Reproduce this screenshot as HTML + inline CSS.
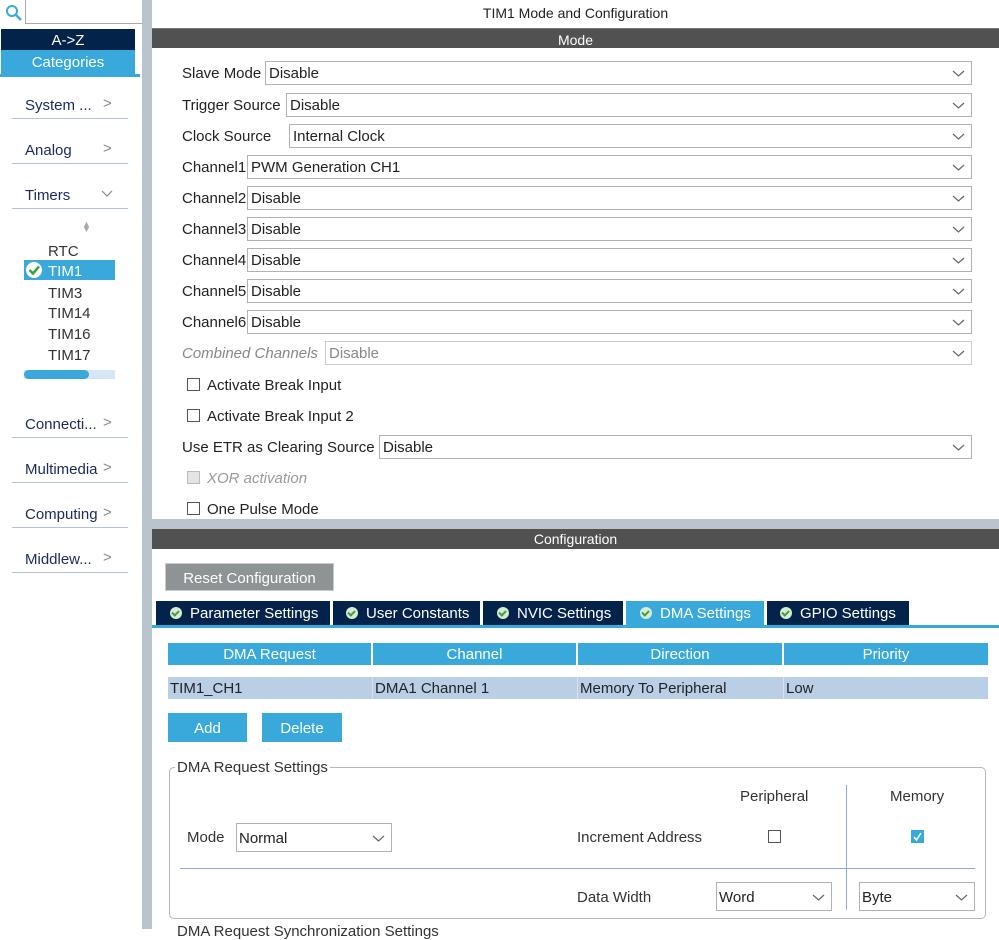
<!DOCTYPE html>
<html><head><meta charset="utf-8"><style>
*{box-sizing:border-box;margin:0;padding:0}
body{width:999px;height:929px;overflow:hidden;background:#fff;font-family:"Liberation Sans",Arial,sans-serif;font-size:15px;color:#222;position:relative}
.a{position:absolute}
.sel{position:absolute;height:24px;border:1px solid #aeb3b8;background:#fff;padding-left:3px;line-height:24px;right:27px;color:#222}
.sel .v,.sm .v{position:absolute;right:6px;top:8px;width:13px;height:7px}
.lbl{position:absolute;left:182px;line-height:26px}
.cb{position:absolute;width:13px;height:13px;border:1px solid #555;background:#fff}
.side{position:absolute;left:25px;color:#1b2a5a;font-size:15px}
.sline{position:absolute;left:12px;width:116px;height:1px;background:#b4c3d2}
.chev{position:absolute;left:103px;color:#888;font-size:15px}
.tab{position:absolute;top:601px;height:24px;background:#03234b;color:#fff;line-height:25px;font-size:15px;padding-left:14px}
.tab i{display:inline-block;width:12px;height:12px;border-radius:50%;background:#d8ecd2;margin-right:8px;vertical-align:-1px;position:relative}
.tab i:after{content:"";position:absolute;left:3px;top:2px;width:3px;height:5px;border:solid #3aa047;border-width:0 2px 2px 0;transform:rotate(45deg)}
.th{position:absolute;top:643px;height:22px;background:#39a9dc;color:#fff;text-align:center;line-height:24px}
.td{position:absolute;top:677px;height:22px;background:#b9cfe6;line-height:24px;padding-left:2px}
.sm{position:absolute;height:29px;border:1px solid #aeb3b8;background:#fff;line-height:29px;padding-left:2px}
</style></head><body>
<svg width="0" height="0" style="position:absolute"><defs><symbol id="dv" viewBox="0 0 13 7"><path d="M1 1 L6.5 6 L12 1" fill="none" stroke="#666" stroke-width="1.2"/></symbol></defs></svg>
<div class="a" style="left:142px;top:0;width:10px;height:929px;background:#b9c4cc"></div>
<svg class="a" style="left:5px;top:4px" width="18" height="18"><circle cx="7" cy="7" r="5" fill="none" stroke="#39a9dc" stroke-width="2"/><path d="M11 11 L16 16" stroke="#39a9dc" stroke-width="2.5"/></svg>
<div class="a" style="left:25px;top:0;width:117px;height:24px;border-left:1px solid #aaa;border-bottom:1px solid #aaa"></div>
<div class="a" style="left:1px;top:29px;width:134px;height:21px;background:#03234b;color:#fff;text-align:center;line-height:23px">A-&gt;Z</div>
<div class="a" style="left:1px;top:50px;width:134px;height:24px;background:#39a9dc;color:#fff;text-align:center;line-height:25px">Categories</div>
<div class="a" style="left:0;top:74px;width:140px;height:3px;background:#39a9dc"></div>
<div class="side" style="top:97px">System ...</div><div class="chev" style="top:95px">&gt;</div><div class="sline" style="top:118px"></div>
<div class="side" style="top:142px">Analog</div><div class="chev" style="top:140px">&gt;</div><div class="sline" style="top:163px"></div>
<div class="side" style="top:187px">Timers</div><svg class="a" style="left:101px;top:190px" width="12" height="8"><path d="M1 1 L6 6 L11 1" fill="none" stroke="#888" stroke-width="1.2"/></svg><div class="sline" style="top:208px"></div>
<div class="a" style="left:82px;top:222px;color:#aaa;font-size:9px;line-height:5px">▲<br>▼</div>
<div class="a" style="left:48px;top:243px;color:#333">RTC</div>
<div class="a" style="left:24px;top:260px;width:91px;height:20px;background:#39a9dc"></div>
<svg class="a" style="left:25px;top:261px" width="18" height="18"><circle cx="9" cy="9" r="8" fill="#fff"/><path d="M4.5 9 L8 12.5 L14 5.5" fill="none" stroke="#3aa047" stroke-width="2.5"/></svg>
<div class="a" style="left:48px;top:263px;color:#fff">TIM1</div>
<div class="a" style="left:48px;top:285px;color:#333">TIM3</div>
<div class="a" style="left:48px;top:305px;color:#333">TIM14</div>
<div class="a" style="left:48px;top:326px;color:#333">TIM16</div>
<div class="a" style="left:48px;top:347px;color:#333">TIM17</div>
<div class="a" style="left:24px;top:370px;width:91px;height:9px;background:#d5e6f5"></div>
<div class="a" style="left:24px;top:370px;width:65px;height:9px;background:#39a9dc;border-radius:5px"></div>
<div class="side" style="top:416px">Connecti...</div><div class="chev" style="top:414px">&gt;</div><div class="sline" style="top:437px"></div>
<div class="side" style="top:461px">Multimedia</div><div class="chev" style="top:459px">&gt;</div><div class="sline" style="top:482px"></div>
<div class="side" style="top:506px">Computing</div><div class="chev" style="top:504px">&gt;</div><div class="sline" style="top:527px"></div>
<div class="side" style="top:551px">Middlew...</div><div class="chev" style="top:549px">&gt;</div><div class="sline" style="top:572px"></div>
<div class="a" style="left:152px;top:5px;width:847px;text-align:center;font-size:14px">TIM1 Mode and Configuration</div>
<div class="a" style="left:152px;top:28px;width:847px;height:20px;background:#505150;color:#fff;text-align:center;line-height:22px;font-size:14px;border-top:1px solid #777">Mode</div>
<div class="lbl" style="top:61px">Slave Mode</div><div class="sel" style="left:265px;top:61px;width:707px">Disable<svg class="v"><use href="#dv"/></svg></div>
<div class="lbl" style="top:93px">Trigger Source</div><div class="sel" style="left:286px;top:93px;width:686px">Disable<svg class="v"><use href="#dv"/></svg></div>
<div class="lbl" style="top:124px">Clock Source</div><div class="sel" style="left:289px;top:124px;width:683px">Internal Clock<svg class="v"><use href="#dv"/></svg></div>
<div class="lbl" style="top:155px">Channel1</div><div class="sel" style="left:247px;top:155px;width:725px">PWM Generation CH1<svg class="v"><use href="#dv"/></svg></div>
<div class="lbl" style="top:186px">Channel2</div><div class="sel" style="left:247px;top:186px;width:725px">Disable<svg class="v"><use href="#dv"/></svg></div>
<div class="lbl" style="top:217px">Channel3</div><div class="sel" style="left:247px;top:217px;width:725px">Disable<svg class="v"><use href="#dv"/></svg></div>
<div class="lbl" style="top:248px">Channel4</div><div class="sel" style="left:247px;top:248px;width:725px">Disable<svg class="v"><use href="#dv"/></svg></div>
<div class="lbl" style="top:279px">Channel5</div><div class="sel" style="left:247px;top:279px;width:725px">Disable<svg class="v"><use href="#dv"/></svg></div>
<div class="lbl" style="top:310px">Channel6</div><div class="sel" style="left:247px;top:310px;width:725px">Disable<svg class="v"><use href="#dv"/></svg></div>
<div class="lbl" style="top:341px;color:#888;font-style:italic">Combined Channels</div><div class="sel" style="left:325px;top:341px;width:647px;color:#888;border-color:#ccc">Disable<svg class="v"><use href="#dv"/></svg></div>
<div class="cb" style="left:187px;top:378px"></div><div class="a" style="left:207px;top:377px">Activate Break Input</div>
<div class="cb" style="left:187px;top:409px"></div><div class="a" style="left:207px;top:408px">Activate Break Input 2</div>
<div class="lbl" style="top:435px">Use ETR as Clearing Source</div><div class="sel" style="left:379px;top:435px;width:593px">Disable<svg class="v"><use href="#dv"/></svg></div>
<div class="cb" style="left:187px;top:471px;background:#e4e4e4;border-color:#bbb"></div><div class="a" style="left:207px;top:470px;color:#999;font-style:italic">XOR activation</div>
<div class="cb" style="left:187px;top:502px"></div><div class="a" style="left:207px;top:501px">One Pulse Mode</div>
<div class="a" style="left:152px;top:519px;width:847px;height:10px;background:#b9c4cc"></div>
<div class="a" style="left:152px;top:529px;width:847px;height:20px;background:#505150;color:#fff;text-align:center;line-height:21px;font-size:14px">Configuration</div>
<div class="a" style="left:165px;top:563px;width:169px;height:28px;background:#8e9396;color:#fff;line-height:29px;text-align:center;border:1px solid #c8cbcd">Reset Configuration</div>
<div class="tab" style="left:156px;width:174px;padding-left:14px"><i></i>Parameter Settings</div>
<div class="tab" style="left:333px;width:147px;padding-left:13px"><i></i>User Constants</div>
<div class="tab" style="left:483px;width:140px"><i></i>NVIC Settings</div>
<div class="tab" style="left:626px;width:138px;background:#39a9dc;padding-left:14px"><i></i>DMA Settings</div>
<div class="tab" style="left:767px;width:142px;padding-left:13px"><i></i>GPIO Settings</div>
<div class="a" style="left:152px;top:625px;width:847px;height:3px;background:#39a9dc"></div>
<div class="th" style="left:168px;width:203px">DMA Request</div>
<div class="th" style="left:373px;width:203px">Channel</div>
<div class="th" style="left:578px;width:204px">Direction</div>
<div class="th" style="left:784px;width:204px">Priority</div>
<div class="td" style="left:168px;width:204px">TIM1_CH1</div>
<div class="td" style="left:372px;width:205px;border-left:1px solid #dde">DMA1 Channel 1</div>
<div class="td" style="left:577px;width:206px;border-left:1px solid #dde">Memory To Peripheral</div>
<div class="td" style="left:783px;width:205px;border-left:1px solid #dde">Low</div>
<div class="a" style="left:168px;top:713px;width:79px;height:29px;background:#39a9dc;color:#fff;text-align:center;line-height:31px">Add</div>
<div class="a" style="left:262px;top:713px;width:80px;height:29px;background:#39a9dc;color:#fff;text-align:center;line-height:31px">Delete</div>
<div class="a" style="left:169px;top:767px;width:817px;height:152px;border:1px solid #b5b9bd;border-radius:5px"></div>
<div class="a" style="left:175px;top:759px;background:#fff;padding:0 2px;line-height:18px;color:#333">DMA Request Settings</div>
<div class="a" style="left:740px;top:788px;color:#333">Peripheral</div>
<div class="a" style="left:890px;top:788px;color:#333">Memory</div>
<div class="a" style="left:846px;top:785px;width:1px;height:125px;background:#8fa9dd"></div>
<div class="a" style="left:180px;top:868px;width:795px;height:1px;background:#8fa9dd"></div>
<div class="a" style="left:187px;top:829px;color:#333">Mode</div>
<div class="sm" style="left:236px;top:823px;width:156px">Normal<svg class="v" style="top:11px"><use href="#dv"/></svg></div>
<div class="a" style="left:577px;top:829px;color:#333">Increment Address</div>
<div class="cb" style="left:768px;top:830px"></div>
<div class="a" style="left:911px;top:830px;width:13px;height:13px;background:#39a9dc"></div>
<svg class="a" style="left:911px;top:830px" width="13" height="13"><path d="M3 7 L5.5 10 L10 3" fill="none" stroke="#fff" stroke-width="1.5"/></svg>
<div class="a" style="left:577px;top:889px;color:#333">Data Width</div>
<div class="sm" style="left:716px;top:882px;width:116px">Word<svg class="v" style="top:11px"><use href="#dv"/></svg></div>
<div class="sm" style="left:859px;top:882px;width:116px">Byte<svg class="v" style="top:11px"><use href="#dv"/></svg></div>
<div class="a" style="left:177px;top:923px;color:#333">DMA Request Synchronization Settings</div>
</body></html>
